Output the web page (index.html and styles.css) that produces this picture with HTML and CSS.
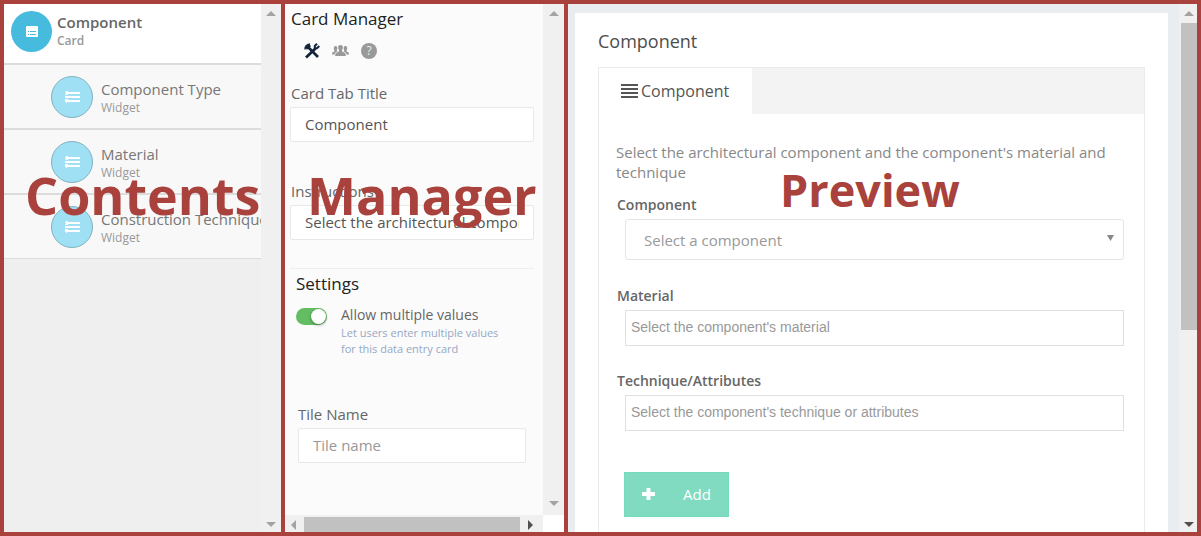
FILE: index.html
```html
<!DOCTYPE html>
<html lang="en">
<head>
<meta charset="utf-8">
<title>Card Designer</title>
<link rel="stylesheet" href="styles.css">
</head>
<body>
<svg class="defs" aria-hidden="true">
  <symbol id="up" viewBox="0 0 10 5"><path d="M0 5L5 0l5 5z"/></symbol>
  <symbol id="down" viewBox="0 0 10 5"><path d="M0 0l5 5 5-5z"/></symbol>
  <symbol id="left" viewBox="0 0 5 10"><path d="M5 0L0 5l5 5z"/></symbol>
  <symbol id="right" viewBox="0 0 5 10"><path d="M0 0l5 5-5 5z"/></symbol>
  <symbol id="list" viewBox="0 0 15 12"><path d="M3 2h12M3 6h12M3 10h12" stroke="#fff" stroke-width="2"/><path d="M0 1h1V0h2v4H0V3h1V2H0zM0 5h3v2H0zM0 8h3v3H2v1H1v-1H0z" fill="#fff"/></symbol>
</svg>
<main class="frame">
  <section class="panel contents" aria-label="Contents">
    <ul class="tree">
      <li class="node root">
        <span class="badge"><svg width="12" height="11" viewBox="0 0 12 11"><path fill="#fff" d="M1 0h10a1 1 0 0 1 1 1v9a1 1 0 0 1-1 1H1a1 1 0 0 1-1-1V1a1 1 0 0 1 1-1z"/><path d="M2 5.500h1M4 5.500h6M2 8.500h1M4 8.500h6" stroke="#47bbdd"/></svg></span>
        <span class="text"><span class="title">Component</span><span class="kind">Card</span></span>
      </li>
      <li class="node"><span class="badge"><svg width="15" height="12"><use href="#list"/></svg></span>
        <span class="text"><span class="title">Component Type</span><span class="kind">Widget</span></span></li>
      <li class="node"><span class="badge"><svg width="15" height="12"><use href="#list"/></svg></span>
        <span class="text"><span class="title">Material</span><span class="kind">Widget</span></span></li>
      <li class="node"><span class="badge"><svg width="15" height="12"><use href="#list"/></svg></span>
        <span class="text"><span class="title">Construction Technique</span><span class="kind">Widget</span></span></li>
    </ul>
    <div class="vbar" aria-hidden="true"><svg width="10" height="5"><use href="#up"/></svg><svg width="10" height="5"><use href="#down"/></svg></div>
    <strong class="caption">Contents</strong>
  </section>

  <section class="panel manager" aria-label="Manager">
    <div class="settings">
      <h2 class="heading">Card Manager</h2>
      <div class="tools">
        <button class="tool active" type="button" aria-label="Configure"><svg width="16" height="16" viewBox="0 0 16 16" fill="none" stroke="#14233c"><path d="M4.500 4.500L14 14" stroke-width="2.600"/><path d="M1 6.500C1 4 2.500 1.500 6 1" stroke-width="1.500"/><path d="M2 5.500l4-3.500" stroke-width="3"/><path d="M2 14.500l9.500-9" stroke-width="2.800"/><path d="M13 .8L10.800 3v2.200H13L15.300 3" stroke-width="2"/></svg></button>
        <button class="tool" type="button" aria-label="Permissions"><svg width="17" height="12" viewBox="0 0 17 12" fill="#999"><path d="M8.500 0c1.800 0 2.500 1.300 2.300 3-.1 1.200-.8 1.800-.9 2.600 0 1.300 1.100 1.600 2.600 2.200 1 .4 1.300 1.400 1.300 3.200H3.200c0-1.800.3-2.800 1.300-3.200C6 7.200 7.100 6.900 7.100 5.600 7 4.800 6.300 4.200 6.200 3 6 1.300 6.700 0 8.500 0z"/><path d="M3.500 1C5 .9 5.300 2 5.300 3.300c0 1.200-.6 1.700-.6 2.400l1 .9c-1.700.7-2.800 1-3.200 2.900H0c0-1.700.2-2 1.300-2.500.9-.4 1.300-.6 1.200-1.400C2 5 1.800 4.400 1.800 3.300 1.800 2 2.200 1 3.500 1zM13.500 1C12 .9 11.700 2 11.700 3.300c0 1.200.6 1.700.6 2.400l-1 .9c1.700.7 2.800 1 3.200 2.900H17c0-1.700-.2-2-1.300-2.500-.9-.4-1.300-.6-1.200-1.400.5-.7.700-1.300.7-2.400 0-1.300-.4-2.300-1.700-2.300z"/></svg></button>
        <button class="tool help" type="button" aria-label="Help">?</button>
      </div>
      <label class="label" for="tab-title">Card Tab Title</label>
      <input class="field" id="tab-title" type="text" value="Component">
      <label class="label next" for="instructions">Instructions</label>
      <input class="field" id="instructions" type="text" value="Select the architectural component and the component's material and technique">
      <div class="group">
        <h3 class="heading sub">Settings</h3>
        <div class="option">
          <input class="switch" id="multi" type="checkbox" checked>
          <label class="option-text" for="multi"><span class="option-name">Allow multiple values</span><span class="hint">Let users enter multiple values for this data entry card</span></label>
        </div>
        <div class="tile">
          <label class="label" for="tile">Tile Name</label>
          <input class="field" id="tile" type="text" placeholder="Tile name">
        </div>
      </div>
    </div>
    <div class="vbar" aria-hidden="true"><svg width="10" height="5"><use href="#up"/></svg><svg width="10" height="5"><use href="#down"/></svg></div>
    <div class="hbar" aria-hidden="true"><svg width="5" height="10"><use href="#left"/></svg><span class="hthumb"></span><svg class="dark" width="5" height="10"><use href="#right"/></svg></div>
    <strong class="caption">Manager</strong>
  </section>

  <section class="panel preview" aria-label="Preview">
    <div class="page">
      <div class="card">
        <h2 class="card-title">Component</h2>
        <div class="tabbox">
          <div class="tabs" role="tablist">
            <button class="tab" type="button" role="tab" aria-selected="true"><svg width="17" height="14" viewBox="0 0 17 14"><path d="M0 1h17M0 5h17M0 9h17M0 13h17" stroke="#555" stroke-width="2"/></svg>Component</button>
          </div>
          <form class="form">
            <p class="intro">Select the architectural component and the component's material and technique</p>
            <label class="form-label" for="component">Component</label>
            <div class="select-wrap">
              <select class="entry drop" id="component"><option>Select a component</option></select>
              <svg class="arrow" width="7" height="6" viewBox="0 0 7 6"><path d="M0 0h7L3.500 6z" fill="#888"/></svg>
            </div>
            <label class="form-label" for="material">Material</label>
            <input class="entry" id="material" type="text" placeholder="Select the component's material">
            <label class="form-label" for="technique">Technique/Attributes</label>
            <input class="entry" id="technique" type="text" placeholder="Select the component's technique or attributes">
            <button class="add" type="button"><svg width="13" height="12" viewBox="0 0 13 12"><path d="M5 0h3q.5 0 .5.500V4h4q.5 0 .5.500v3q0 .5-.5.500h-4v3.500q0 .5-.5.500H5q-.5 0-.5-.5V8h-4Q0 8 0 7.500v-3Q0 4 .5 4h4V.5Q4.500 0 5 0z" fill="#fff"/></svg>Add</button>
          </form>
        </div>
      </div>
    </div>
    <div class="vbar" aria-hidden="true"><svg width="10" height="5"><use href="#up"/></svg><span class="vthumb"></span><svg class="dark" width="10" height="5"><use href="#down"/></svg></div>
    <strong class="caption">Preview</strong>
  </section>
</main>
</body>
</html>
```
FILE: styles.css
```css
* { box-sizing: border-box; }
body {
  margin: 0;
  background: #a9423c;
  font-family: "Open Sans", sans-serif;
  font-size: 15px;
  line-height: 20px;
  color: #666;
}
h2, h3, p, ul { margin: 0; padding: 0; font-weight: 400; }
button, input, select { font: inherit; color: inherit; border: 0; margin: 0; }
.defs { position: absolute; width: 0; height: 0; }

.frame {
  display: grid;
  grid-template-columns: 277px 279px minmax(0, 1fr);
  gap: 4px;
  padding: 4px;
  height: 100vh;
}
.panel { position: relative; display: grid; min-width: 0; min-height: 0; overflow: hidden; }
.caption {
  position: absolute;
  top: 155px;
  left: 22px;
  font-size: 52px;
  line-height: 72px;
  font-weight: 700;
  color: #a9423c;
  pointer-events: none;
}

.vbar {
  display: flex;
  flex-direction: column;
  justify-content: space-between;
  align-items: center;
  padding: 7px 0 5px;
  background: #f0f0f0;
  fill: #a3a3a3;
}
.dark { fill: #505050; }

/* Contents */
.contents { grid-template-columns: minmax(0, 1fr) 20px; background: #efefef; }
.contents .caption { left: 21px; }
.tree { list-style: none; overflow: hidden; }
.node {
  display: flex;
  gap: 8px;
  align-items: center;
  height: 65px;
  padding-left: 47px;
  background: #f8f8f8;
  border-bottom: 2px solid #dcdcdc;
  white-space: nowrap;
}
.node:last-child { height: 64px; border-bottom-width: 1px; }
.badge {
  display: flex;
  flex: none;
  align-items: center;
  justify-content: center;
  width: 42px;
  height: 42px;
  border-radius: 50%;
  background: #9fe0f4;
  border: 1px solid #82b3c1;
}
.text { display: flex; flex-direction: column; padding-top: 3px; }
.title { color: #777; }
.kind { font-size: 12px; line-height: 18px; color: #999; }
.root { height: 61px; padding: 0 0 4px 7px; gap: 5px; background: #fff; }
.root .badge { width: 41px; height: 41px; background: #47bbdd; border: 0; }
.root .text { padding: 0 0 2px; }
.root .title { font-weight: 600; color: #666; }
.root .kind { font-weight: 600; }

/* Manager */
.manager { grid-template: minmax(0, 1fr) 17px / minmax(0, 1fr) 21px; background: #fff; }
.manager .vbar { padding-bottom: 9px; }
.settings { background: #fbfbfb; padding: 0 9px 0 5px; overflow: hidden; }
.heading { padding-left: 1px; font-size: 17px; line-height: 30px; color: #222; }
.tools { display: flex; gap: 12px; align-items: center; height: 34px; padding-left: 14px; margin-bottom: 15px; }
.tool { display: flex; padding: 0; background: none; }
.help {
  align-items: center;
  justify-content: center;
  width: 16px;
  height: 16px;
  border-radius: 50%;
  background: #999;
  color: #eee;
  font-size: 12px;
  line-height: 16px;
}
.label { display: block; padding-left: 1px; margin-bottom: 4px; }
.next { margin-top: 39px; }
.field {
  display: block;
  width: 100%;
  height: 35px;
  padding: 0 14px 2px;
  background: #fff;
  border: 1px solid #e8e8e8;
  border-radius: 2px;
  color: #555;
}
.field::placeholder, .entry::placeholder { color: #999; opacity: 1; }
.group { margin-top: 28px; border-top: 1px solid #eee; }
.sub { padding-left: 6px; }
.option { display: flex; gap: 14px; padding: 6px 20px 47px 6px; }
.switch {
  appearance: none;
  flex: none;
  width: 31px;
  height: 17px;
  margin-top: 3px;
  border-radius: 9px;
  background: #64bd63;
}
.switch::after {
  content: "";
  display: block;
  width: 15px;
  height: 15px;
  margin: 1px 0 0 15px;
  border-radius: 50%;
  background: #fff;
  box-shadow: 0 1px 3px rgba(0, 0, 0, .4);
}
.option-name { display: block; font-size: 14px; }
.hint { display: block; font-size: 11px; line-height: 16px; color: #97a8c4; }
.tile { padding: 0 8px; }
.tile .label { padding-left: 0; }
.hbar { display: flex; align-items: center; gap: 8px; padding: 2px 10px 0 6px; background: #f0f0f0; fill: #a3a3a3; }
.hthumb { flex: 1; height: 15px; background: #c1c1c1; }

/* Preview */
.preview { grid-template-columns: minmax(0, 1fr) 18px; background: #e9edf0; }
.page { display: grid; min-height: 0; padding: 9px 11px 0 7px; }
.card { display: flex; flex-direction: column; padding: 13px 23px 0; background: #fff; }
.card-title { margin-bottom: 11px; font-size: 18px; line-height: 30px; color: #4d4d4d; }
.tabbox { flex: 1; border: 1px solid #ebebeb; border-bottom: 0; }
.tabs { display: flex; background: #f3f3f3; }
.tab { display: flex; align-items: center; gap: 3px; height: 46px; padding: 0 23px 0 22px; background: #fff; font-size: 16px; color: #555; }
.form { padding: 28px 20px 0 17px; }
.intro { margin-bottom: 13px; color: #888; }
.form-label { display: block; padding-left: 1px; margin-bottom: 4px; font-size: 14px; font-weight: 600; }
.select-wrap { position: relative; margin-bottom: 26px; }
.entry {
  display: block;
  width: calc(100% - 9px);
  height: 36px;
  margin: 0 0 25px 9px;
  padding: 0 5px 2px;
  background: #fff;
  border: 1px solid #dfdfe3;
  font-family: "Liberation Sans", sans-serif;
  font-size: 14px;
  color: #999;
}
.drop { appearance: none; height: 41px; margin-bottom: 0; padding: 0 18px; border-color: #e5e5e5; border-radius: 3px; font-family: inherit; font-size: 15px; }
.arrow { position: absolute; right: 10px; top: 16px; }
.add {
  display: flex;
  align-items: center;
  gap: 28px;
  height: 45px;
  margin: 41px 0 0 8px;
  padding: 0 17px 2px;
  background: #80dbc1;
  border: 1px solid #76dabc;
  color: #fff;
}
.preview .vbar { padding-left: 2px; }
.vthumb { width: 16px; height: 307px; margin: 7px 0 auto; background: #c1c1c1; }
.preview .caption { left: 212px; top: 150px; font-size: 45px; }
```
